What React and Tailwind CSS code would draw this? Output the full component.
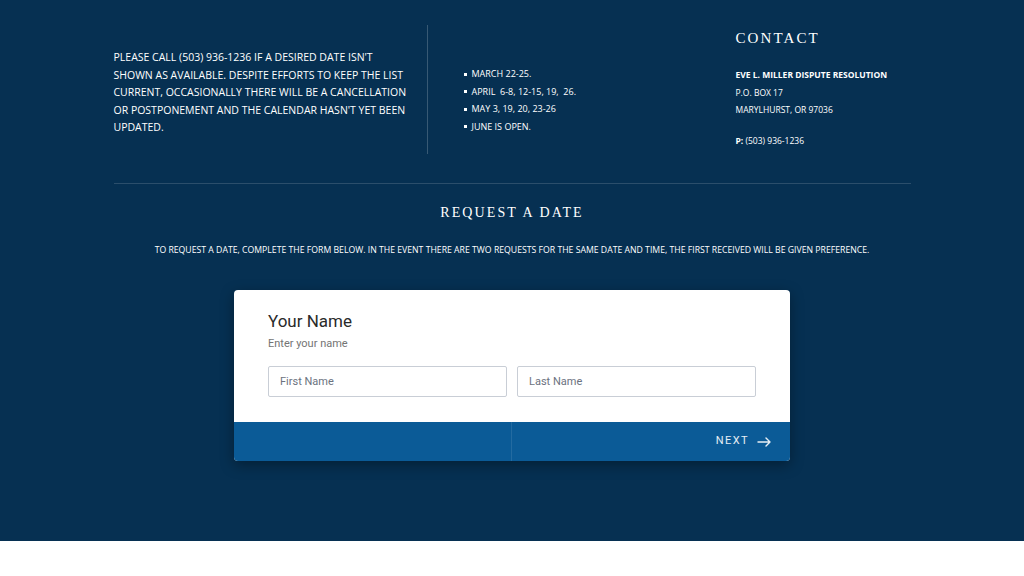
const dates = ['MARCH 22-25.', 'APRIL  6-8, 12-15, 19,  26.', 'MAY 3, 19, 20, 23-26', 'JUNE IS OPEN.'];

const App = () => {
  return (
    <div className="min-h-screen bg-white" style={{ fontFamily: '"Open Sans", sans-serif' }}>
      {/* Dark section */}
      <section className="bg-[#063052] h-[541px] text-white">
        <div className="w-[797px] mx-auto">
          {/* Top info row */}
          <div className="flex items-start pt-[25px]">
            <div className="w-[314px] h-[129px] border-r border-white/20 pt-[24px]">
              <p className="w-[300px] text-[10.5px] leading-[17.5px]">
                PLEASE CALL (503) 936-1236 IF A DESIRED DATE ISN'T SHOWN AS AVAILABLE. DESPITE EFFORTS TO KEEP THE LIST
                CURRENT, OCCASIONALLY THERE WILL BE A CANCELLATION OR POSTPONEMENT AND THE CALENDAR HASN'T YET BEEN UPDATED.
              </p>
            </div>
            <div className="w-[308px] pl-[36px] pt-[43px]">
              <ul className="flex flex-col gap-[5.5px]">
                {dates.map((d) => (
                  <li key={d} className="flex items-center text-[9px] leading-[12px] whitespace-pre">
                    <span className="w-[3px] h-[3px] bg-white mr-[5px]"></span>
                    {d}
                  </li>
                ))}
              </ul>
            </div>
            <div className="flex-1">
              <h3
                className="text-[15px] leading-[24px] tracking-[0.14em] mt-[1px]"
                style={{ fontFamily: '"Liberation Serif", serif' }}
              >
                CONTACT
              </h3>
              <div className="mt-[16px] text-[8.5px] leading-[17.5px]">
                <p className="font-bold">EVE L. MILLER DISPUTE RESOLUTION</p>
                <p>P.O. BOX 17</p>
                <p>MARYLHURST, OR 97036</p>
                <p className="mt-[13px]">
                  <span className="font-bold">P:</span> (503) 936-1236
                </p>
              </div>
            </div>
          </div>

          <div className="mt-[29px] border-t border-white/15"></div>

          {/* Request heading */}
          <h2
            className="mt-[19px] text-center text-[14px] leading-[20px] tracking-[0.15em]"
            style={{ fontFamily: '"Liberation Serif", serif' }}
          >
            REQUEST A DATE
          </h2>
          <p className="mt-[21px] text-center text-[8.7px] leading-[12px] whitespace-nowrap">
            TO REQUEST A DATE, COMPLETE THE FORM BELOW. IN THE EVENT THERE ARE TWO REQUESTS FOR THE SAME DATE AND TIME, THE FIRST RECEIVED WILL BE GIVEN PREFERENCE.
          </p>
        </div>

        {/* Form card */}
        <div
          className="mt-[34px] mx-auto w-[556px] rounded-[4px] overflow-hidden bg-white shadow-[0_4px_14px_rgba(0,0,0,0.35)]"
          style={{ fontFamily: 'Roboto, sans-serif' }}
        >
          <div className="px-[34px] pt-[21px] pb-[25px]">
            <h4 className="text-[17px] leading-[20px] text-[#2a2a2a]">Your Name</h4>
            <p className="mt-[6px] text-[11px] leading-[14px] text-[#747474]">Enter your name</p>
            <div className="mt-[15px] flex gap-[10px]">
              <input
                type="text"
                placeholder="First Name"
                className="w-[239px] h-[31px] border border-[#c9ced6] rounded-[2px] px-[11px] text-[11px] text-[#333] placeholder:text-[#6b7280] outline-none"
              />
              <input
                type="text"
                placeholder="Last Name"
                className="w-[239px] h-[31px] border border-[#c9ced6] rounded-[2px] px-[11px] text-[11px] text-[#333] placeholder:text-[#6b7280] outline-none"
              />
            </div>
          </div>
          <div className="flex h-[39px] bg-[#0b5b97]">
            <div className="w-[278px] border-r border-white/10"></div>
            <button className="flex-1 flex items-center justify-end pr-[19px] gap-[8px] text-white/90 text-[11px] tracking-[0.13em]">
              NEXT
              <svg width="14" height="10" viewBox="0 0 14 10" fill="none" stroke="currentColor" strokeWidth="1.4" strokeLinecap="round" strokeLinejoin="round">
                <path d="M1 5h12M9 1l4 4-4 4" />
              </svg>
            </button>
          </div>
        </div>
      </section>
    </div>
  );
};

export default App;
